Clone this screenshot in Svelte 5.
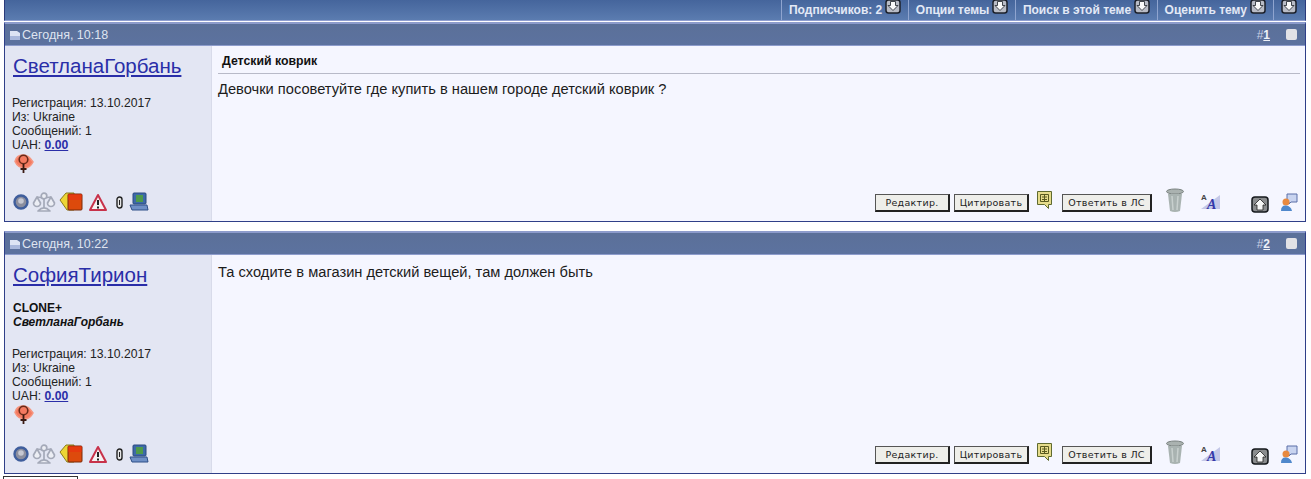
<script>
  const posts = [
    { date: 'Сегодня, 10:18', num: 1, name: 'СветланаГорбань', title: 'Детский коврик', text: 'Девочки посоветуйте где купить в нашем городе детский коврик ?', clone: null, h: 'p1' },
    { date: 'Сегодня, 10:22', num: 2, name: 'СофияТирион', title: null, text: 'Та сходите в магазин детский вещей, там должен быть', clone: 'СветланаГорбань', h: 'p2' }
  ];
  const menu = ['Подписчиков: 2', 'Опции темы', 'Поиск в этой теме', 'Оценить тему', ''];
</script>

{#snippet arrow()}
  <svg class="arrow" width="16" height="15" viewBox="0 0 16 15">
    <rect x="1" y="1" width="14" height="13" rx="2.500" fill="#b9bcc6" stroke="#1c202a" stroke-width="1.500"/>
    <path d="M5.500 2.500h5v4h2.500L8 11.500 3 6.500h2.500z" fill="#fafafa" stroke="#30343c" stroke-width=".9"/>
  </svg>
{/snippet}

{#snippet doc()}
  <svg class="doc" width="10" height="10" viewBox="0 0 10 10"><path d="M0 1h7l3 2v7H0z" fill="#dde4f4"/><path d="M0 6h10v4H0z" fill="#a9b8dc"/></svg>
{/snippet}

<div class="page">
  <div class="topbar">
    {#each menu as m}
      <div class="menu" class:last={!m}>{#if m}<span>{m}</span>{/if}{@render arrow()}</div>
    {/each}
  </div>

  {#each posts as p}
    <article class="post {p.h}">
      <header class="head">
        <div class="date">{@render doc()}{p.date}</div>
        <div class="num">#<u>{p.num}</u><i class="check"></i></div>
      </header>
      <div class="body">
        <aside class="user">
          <a class="name" href="#u">{p.name}</a>
          {#if p.clone}
            <div class="clone"><b>CLONE+</b><br /><b><em>{p.clone}</em></b></div>
          {/if}
          <div class="info">
            Регистрация: 13.10.2017<br />
            Из: Ukraine<br />
            Сообщений: 1<br />
            UAH: <a class="uah" href="#u">0.00</a>
          </div>
          <svg class="gender" width="22" height="22" viewBox="0 0 22 22">
            <path d="M2 9.500C3 5 6 3 10 3c4 0 7 2 10 7-2 4-5 6-8 6-5 0-8-2-10-6.500z" fill="#f47a60" stroke="#f59680" stroke-width="1.500"/>
            <circle cx="10.500" cy="7.500" r="4.300" fill="none" stroke="#6a2a18" stroke-width="1.600"/>
            <path d="M10.500 12v9M7.500 17h6" stroke="#3a1a12" stroke-width="1.800"/>
          </svg>
          <div class="status">
            <svg width="16" height="16" viewBox="0 0 16 16"><circle cx="8" cy="8" r="6.500" fill="#8b8e9e" stroke="#3f5e9c" stroke-width="2.400"/><circle cx="8" cy="7" r="2.800" fill="#c6c8d2"/></svg>
            <svg width="24" height="20" viewBox="0 0 24 20"><g fill="#eceef4" stroke="#a4a9b8" stroke-width="1.700" stroke-linejoin="round"><path d="M12 2v14M5 5l7 1 7-1" fill="none"/><circle cx="12" cy="4" r="2.800"/><path d="M1.500 11 5 5l3.500 6a3.500 3.500 0 0 1-7 0zM15.500 11 19 5l3.500 6a3.500 3.500 0 0 1-7 0zM6 19q6-6 12 0z"/></g></svg>
            <svg width="24" height="20" viewBox="0 0 24 20"><path d="M1 8 7 1h8v17H8z" fill="#ecd534" stroke="#8a7a1c"/><rect x="9" y="2" width="14" height="16" rx="1" fill="#dd4a0c" stroke="#7a2a08"/><path d="M9 2h14v6H9z" fill="#ee2a10" opacity=".5"/></svg>
            <svg width="18" height="19" viewBox="0 0 18 19"><path d="M9 2 17 17H1z" fill="#f6f2f2" stroke="#c8324a" stroke-width="2" stroke-linejoin="round"/><path d="M9 7v5M9 13.500v2" stroke="#222" stroke-width="2"/></svg>
            <svg width="7" height="13" viewBox="0 0 7 13"><rect x="1" y="1" width="5" height="11" rx="2.500" fill="#e6e6e6" stroke="#222" stroke-width="1.400"/><path d="M3.500 4v5" stroke="#222"/></svg>
            <svg width="20" height="20" viewBox="0 0 20 20"><rect x="4" y="1" width="13" height="11" rx="1" fill="#3d6aa8" stroke="#2a4a80"/><rect x="7" y="3" width="7" height="7" fill="#4f9a4a"/><path d="M1 13h17l1 5H3z" fill="#6f90c6" stroke="#2f4f88"/></svg>
          </div>
        </aside>
        <div class="content">
          {#if p.title}<div class="title">{p.title}</div>{/if}
          <div class="text">{p.text}</div>
          <div class="actions">
            <span class="btn b1">Редактир.</span>
            <span class="btn b2">Цитировать</span>
            <svg class="q" width="17" height="20" viewBox="0 0 17 20"><path d="M1.500 1.500h14v13h-3v4l-4-4h-7z" fill="#e6dc8c" stroke="#5f6a30"/><path d="M4.500 4.500h8v7h-8zM6 7h5M6 9.500h5M8.500 4.500v7" fill="none" stroke="#5a5a20"/></svg>
            <span class="btn b3">Ответить в ЛС</span>
            <svg class="trash" width="20" height="25" viewBox="0 0 20 25"><ellipse cx="10" cy="3.500" rx="8.500" ry="2.500" fill="#aab2b0" stroke="#7a8280"/><path d="M3 6h14l-2 17q-5 2-10 0z" fill="#a9b3b1"/><path d="M7 8l1 14M13 8l-1 14" stroke="#c8d0ce" stroke-width="1.500"/></svg>
            <svg class="font" width="22" height="22" viewBox="0 0 22 22"><path d="M1 17 20 3v14z" fill="#c4c8e8"/><text x="1" y="8" class="a1">A</text><text x="7" y="17" class="a2">A</text></svg>
            <svg class="up" width="18" height="17" viewBox="0 0 18 17"><rect x="1" y="1" width="16" height="15" rx="3" fill="#8a8c8e" stroke="#15181c" stroke-width="1.500"/><path d="M9 3 15 9h-3v5H6V9H3z" fill="#f6f6f6" stroke="#222" stroke-width=".8"/></svg>
            <svg class="person" width="18" height="19" viewBox="0 0 18 19"><path d="M7 1h10v8H11l-2 2V9H7z" fill="#c9d4f0" stroke="#5a6ea8"/><circle cx="6" cy="9" r="3.500" fill="#e88a40"/><path d="M1 18q0-6 5-5.500t6 5.500z" fill="#4f88cc"/></svg>
          </div>
        </div>
      </div>
    </article>
  {/each}
  <div class="bottom"></div>
</div>

<style>
  :global(body) { margin: 0; background: #fff; }
  .page { width: 1302px; padding-left: 4px; font-family: "Liberation Sans", Arial, sans-serif; color: #1c1c1c; height: 479px; overflow: hidden; }
  .topbar { height: 21px; display: flex; justify-content: flex-end; background: linear-gradient(#45659c, #5b7cb0); border: 1px solid #2a3a7a; border-top: 0; border-bottom: 1px solid #8f9ed0; box-sizing: border-box; }
  .menu { display: flex; align-items: flex-start; padding: 0 7px 0 6.500px; border-left: 1px solid #8fa4cf; color: #e3e9f6; font: bold 12px/18px "Liberation Sans", sans-serif; gap: 3px; white-space: nowrap; }
  .menu.last { padding: 0 8px 0 7px; }
  .menu span { padding-top: 1px; }
  .arrow { display: block; margin-top: -1px; }
  .post { margin-top: 1px; border: 1px solid #2f3f88; border-top: 2px solid #8d9ccc; background: #f5f6ff; box-sizing: border-box; }
  .p1 { height: 200px; }
  .p2 { height: 243px; margin-top: 9px; }
  .head { height: 22px; display: flex; justify-content: space-between; align-items: center; background: linear-gradient(#5b7099, #5c729f); color: #dfe4f0; font-size: 12.5px; border-bottom: 1px solid #8d9ccc; padding: 0 7px 0 5px; box-sizing: border-box; }
  .date { display: flex; align-items: center; gap: 2px; }
  .doc { margin-top: 1px; }
  .num { display: flex; align-items: center; color: #c8d0e4; font-size: 12px; }
  .num u { color: #eef1f8; font-weight: bold; }
  .check { display: block; width: 11px; height: 11px; margin-left: 16px; margin-right: 1px; background: #e2e2e6; border-radius: 2px; }
  .body { display: flex; height: calc(100% - 22px); }
  .user { width: 207px; flex: none; background: #e3e6f3; border-right: 1px solid #d8dbea; padding: 7px 0 0 8px; box-sizing: border-box; display: flex; flex-direction: column; }
  .name { color: #2a2ea8; font-size: 20.5px; line-height: 25px; text-decoration: underline; }
  .clone { font-size: 12px; line-height: 14px; margin-top: 14px; color: #111; }
  .info { font-size: 12.2px; line-height: 14px; margin: 18px 0 0 -1px; color: #222; }
  .uah { color: #2a2ea8; font-weight: bold; text-decoration: underline; }
  .gender { margin-top: 0; display: block; }
  .status { display: flex; align-items: center; margin-top: auto; margin-bottom: 9px; gap: 3px; height: 20px; }
  .status svg:nth-child(4) { margin-left: 3px; }
  .status svg:nth-child(5) { margin: 0 3px 0 6px; }
  .content { flex: 1; display: flex; flex-direction: column; padding: 0 5px 0 6px; min-width: 0; }
  .title { font: bold 12.3px/14px "Liberation Sans", sans-serif; padding: 8px 0 5px 4px; border-bottom: 1px solid #b8bac8; color: #111; }
  .text { font-size: 14.67px; line-height: 16px; margin-top: 7px; color: #1c1c1c; }
  .p2 .text { margin-top: 9px; }
  .actions { margin-top: auto; display: flex; align-items: flex-end; justify-content: flex-end; height: 30px; margin-bottom: 5px; }
  .btn { display: block; height: 18px; box-sizing: border-box; background: #eeeeea; border: 1px solid #555; border-right: 2px solid #222; border-bottom: 2px solid #222; font: 9.500px/15px "DejaVu Sans", sans-serif; letter-spacing: .3px; text-align: center; color: #222; margin-bottom: 4px; white-space: nowrap; }
  .b1 { width: 75px; margin-right: 4px; }
  .b2 { width: 75px; margin-right: 7px; }
  .b3 { width: 90px; margin-left: 9px; margin-right: 13px; }
  .q { margin-bottom: 6px; }
  .trash { margin-bottom: 3px; margin-right: 15px; }
  .font { margin-bottom: 2px; margin-right: 29px; }
  .up { margin-bottom: 3px; margin-right: 11px; }
  .person { margin-bottom: 4px; margin-right: 2px; }
  .a1 { font: bold 8px "Liberation Sans", sans-serif; fill: #444; }
  .a2 { font: italic bold 14px "Liberation Serif", serif; fill: #3438a8; }
  .bottom { margin-top: 2px; width: 75px; height: 4px; border: 1px solid #333; border-bottom: 0; box-sizing: border-box; margin-left: -1px; }
</style>
